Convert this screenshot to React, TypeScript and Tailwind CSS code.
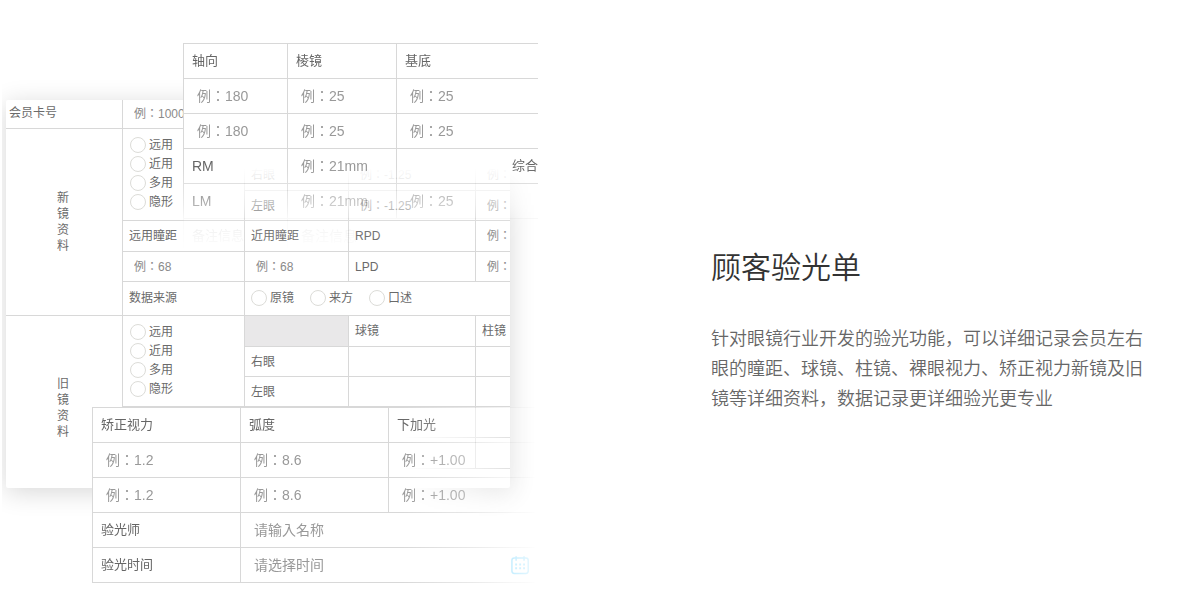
import { useId } from "react";

const cell = "border-t border-l border-[#d8d8d8]";
const smallInput =
  "block w-full bg-transparent pl-[11px] text-[12px] font-['Liberation_Sans','Noto_Sans_CJK_TC',sans-serif] text-[#777] placeholder:text-[#8a8a8a] outline-none";
const bigInput =
  "block w-full bg-transparent pl-[13px] text-[14px] font-['Liberation_Sans','Noto_Sans_CJK_TC',sans-serif] text-[#777] placeholder:text-[#999] outline-none";

const usos = ["远用", "近用", "多用", "隐形"];
const origenes = ["原镜", "来方", "口述"];

const Radios = ({ items, vertical }: { items: string[]; vertical?: boolean }) => {
  const name = useId();
  return (
    <div className={vertical ? "flex flex-col gap-[3px] pb-[2px]" : "flex gap-4"}>
      {items.map((item) => (
        <label key={item} className="flex h-4 items-center gap-[3px] leading-4">
          <input
            type="radio"
            name={name}
            className="size-4 appearance-none rounded-full border border-[#dcdcd8] bg-white checked:border-sky-400"
          />
          {item}
        </label>
      ))}
    </div>
  );
};

const VerticalTitle = ({ text }: { text: string }) => (
  <div className="mx-auto w-3 leading-4 break-all">{text}</div>
);

const MemberTable = () => (
  <table className="w-[504px] table-fixed border-separate border-spacing-0 rounded-xs bg-white text-left text-[12px] leading-4 text-[#6a6a6a] shadow-[0_4px_26px_rgba(0,0,0,0.16)]">
    <colgroup>
      <col className="w-[116px]" />
      <col className="w-[122px]" />
      <col className="w-[104px]" />
      <col className="w-[127px]" />
      <col className="w-[35px]" />
    </colgroup>
    <tbody>
      <tr className="h-7">
        <th className="pl-[3px] pb-[2px] font-normal">会员卡号</th>
        <td colSpan={4} className="border-l border-[#d8d8d8]">
          <input className={smallInput} aria-label="会员卡号" placeholder="例：100001" />
        </td>
      </tr>
      <tr className="h-[31px]">
        <th rowSpan={6} className="border-t border-[#d8d8d8] pr-[2px] font-normal">
          <VerticalTitle text="新镜资料" />
        </th>
        <td rowSpan={3} className={`${cell} pl-[7px]`}>
          <Radios items={usos} vertical />
        </td>
        <td className={`${cell} bg-[#e9e8e9]`} />
        <td className={`${cell} pl-[6px]`}>球镜</td>
        <td className={`${cell} pl-[6px]`}>柱镜</td>
      </tr>
      <tr className="h-[31px]">
        <td className={`${cell} pl-[6px]`}>右眼</td>
        <td className={cell}>
          <input className={smallInput} aria-label="右眼球镜" placeholder="例：-1.25" />
        </td>
        <td className={cell}>
          <input className={smallInput} aria-label="右眼柱镜" placeholder="例：" />
        </td>
      </tr>
      <tr className="h-[30px]">
        <td className={`${cell} pl-[6px]`}>左眼</td>
        <td className={cell}>
          <input className={smallInput} aria-label="左眼球镜" placeholder="例：-1.25" />
        </td>
        <td className={cell}>
          <input className={smallInput} aria-label="左眼柱镜" placeholder="例：" />
        </td>
      </tr>
      <tr className="h-[31px]">
        <td className={`${cell} pl-[6px]`}>远用瞳距</td>
        <td className={`${cell} pl-[6px]`}>近用瞳距</td>
        <td className={`${cell} pl-[6px]`}>RPD</td>
        <td className={cell}>
          <input className={smallInput} aria-label="RPD" placeholder="例：" />
        </td>
      </tr>
      <tr className="h-[30px]">
        <td className={cell}>
          <input className={smallInput} aria-label="远用瞳距" placeholder="例：68" />
        </td>
        <td className={cell}>
          <input className={smallInput} aria-label="近用瞳距" placeholder="例：68" />
        </td>
        <td className={`${cell} pl-[6px]`}>LPD</td>
        <td className={cell}>
          <input className={smallInput} aria-label="LPD" placeholder="例：" />
        </td>
      </tr>
      <tr className="h-[34px]">
        <td className={`${cell} pb-[2px] pl-[6px]`}>数据来源</td>
        <td colSpan={3} className={`${cell} pb-[2px] pl-[6px]`}>
          <Radios items={origenes} />
        </td>
      </tr>
      <tr className="h-[31px]">
        <th rowSpan={6} className="border-t border-[#d8d8d8] pt-3 pr-[2px] font-normal">
          <VerticalTitle text="旧镜资料" />
        </th>
        <td rowSpan={3} className={`${cell} pl-[7px]`}>
          <Radios items={usos} vertical />
        </td>
        <td className={`${cell} bg-[#e9e8e9]`} />
        <td className={`${cell} pl-[6px]`}>球镜</td>
        <td className={`${cell} pl-[6px]`}>柱镜</td>
      </tr>
      <tr className="h-[30px]">
        <td className={`${cell} pl-[6px]`}>右眼</td>
        <td className={cell} />
        <td className={cell} />
      </tr>
      <tr className="h-[30px]">
        <td className={`${cell} pl-[6px]`}>左眼</td>
        <td className={cell} />
        <td className={cell} />
      </tr>
      <tr className="h-[31px]">
        <td className={cell} />
        <td className={cell} />
        <td className={cell} />
        <td className={cell} />
      </tr>
      <tr className="h-[31px]">
        <td className={cell} />
        <td className={cell} />
        <td className={cell} />
        <td className={cell} />
      </tr>
      <tr className="h-5">
        <td colSpan={4} className={cell} />
      </tr>
    </tbody>
  </table>
);

const AxisTable = () => (
  <table className="absolute top-[43px] left-[181px] w-[355px] table-fixed border-separate border-spacing-0 bg-white text-left text-[13px] leading-4 text-[#666] mask-[linear-gradient(to_bottom,black_124px,rgba(0,0,0,0.85)_136px,rgba(0,0,0,0.5)_162px,rgba(0,0,0,0.12)_178px,transparent_208px)]">
    <colgroup>
      <col className="w-[104px]" />
      <col className="w-[109px]" />
      <col />
    </colgroup>
    <tbody>
      <tr className="h-[35px]">
        <th className={`${cell} pl-2 font-normal`}>轴向</th>
        <th className={`${cell} pl-2 font-normal`}>棱镜</th>
        <th className={`${cell} pl-2 font-normal`}>基底</th>
      </tr>
      {["右眼", "左眼"].map((ojo) => (
        <tr key={ojo} className="h-[35px]">
          <td className={cell}>
            <input className={bigInput} aria-label={`${ojo}轴向`} placeholder="例：180" />
          </td>
          <td className={cell}>
            <input className={bigInput} aria-label={`${ojo}棱镜`} placeholder="例：25" />
          </td>
          <td className={cell}>
            <input className={bigInput} aria-label={`${ojo}基底`} placeholder="例：25" />
          </td>
        </tr>
      ))}
      <tr className="h-[35px]">
        <td className={`${cell} pl-2 text-[14px]`}>RM</td>
        <td className={cell}>
          <input className={bigInput} aria-label="RM" placeholder="例：21mm" />
        </td>
        <td className={`${cell} text-right`}>综合</td>
      </tr>
      <tr className="h-[35px]">
        <td className={`${cell} pl-2 text-[14px]`}>LM</td>
        <td className={cell}>
          <input className={bigInput} aria-label="LM" placeholder="例：21mm" />
        </td>
        <td className={cell}>
          <input className={bigInput} aria-label="综合" placeholder="例：25" />
        </td>
      </tr>
      <tr className="h-[35px]">
        <td className={`${cell} pl-2`}>备注信息</td>
        <td colSpan={2} className={cell}>
          <input className={bigInput} aria-label="备注信息" placeholder="备注信息" />
        </td>
      </tr>
    </tbody>
  </table>
);

const CalendarIcon = () => (
  <svg width="20" height="20" viewBox="0 0 20 20" fill="none" stroke="#00b4ff" strokeWidth="1.6">
    <rect x="1" y="2.5" width="17.5" height="16.5" rx="2.5" />
    <path d="M5.5 0.5v5M14 0.5v5" />
    <path d="M4.5 9.5h2M8.8 9.5h2M13 9.5h2M4.5 13.5h2M8.8 13.5h2M13 13.5h2" strokeWidth="2" />
  </svg>
);

const VisionTable = () => (
  <table className="absolute top-[407px] left-[90px] w-[446px] table-fixed border-separate border-spacing-0 border-b border-[#d8d8d8] bg-white text-left text-[13px] leading-4 text-[#666] mask-[linear-gradient(to_right,black_310px,rgba(0,0,0,0.6)_375px,rgba(0,0,0,0.22)_420px,rgba(0,0,0,0.12)_436px,transparent_444px)]">
    <colgroup>
      <col className="w-[148px]" />
      <col className="w-[148px]" />
      <col />
    </colgroup>
    <tbody>
      <tr className="h-[35px]">
        <th className={`${cell} pl-2 font-normal`}>矫正视力</th>
        <th className={`${cell} pl-2 font-normal`}>弧度</th>
        <th className={`${cell} pl-2 font-normal`}>下加光</th>
      </tr>
      {["右眼", "左眼"].map((ojo) => (
        <tr key={ojo} className="h-[35px]">
          <td className={cell}>
            <input className={bigInput} aria-label={`${ojo}矫正视力`} placeholder="例：1.2" />
          </td>
          <td className={cell}>
            <input className={bigInput} aria-label={`${ojo}弧度`} placeholder="例：8.6" />
          </td>
          <td className={cell}>
            <input className={bigInput} aria-label={`${ojo}下加光`} placeholder="例：+1.00" />
          </td>
        </tr>
      ))}
      <tr className="h-[35px]">
        <td className={`${cell} pl-2`}>验光师</td>
        <td colSpan={2} className={cell}>
          <input className={bigInput} aria-label="验光师" placeholder="请输入名称" />
        </td>
      </tr>
      <tr className="h-[35px]">
        <td className={`${cell} pl-2`}>验光时间</td>
        <td colSpan={2} className={cell}>
          <div className="flex items-center pr-2">
            <input className={bigInput} aria-label="验光时间" placeholder="请选择时间" />
            <CalendarIcon />
          </div>
        </td>
      </tr>
    </tbody>
  </table>
);

const App = () => {
  return (
    <section className="flex w-full bg-white font-['Liberation_Sans','Noto_Sans_CJK_SC',sans-serif]">
      <div className="relative ml-0.5 w-[536px] shrink-0 overflow-hidden pt-[100px] pb-[101px] pl-1">
        <MemberTable />
        <AxisTable />
        <VisionTable />
      </div>

      <div className="flex-1 pt-[245px] pr-12 pl-[173px]">
        <h2 className="text-[30px] leading-[45px] font-[350] text-[#333]">顾客验光单</h2>
        <p className="mt-[34px] text-[18px] leading-[30px] font-[350] text-[#666]">
          针对眼镜行业开发的验光功能，可以详细记录会员左右眼的瞳距、球镜、柱镜、裸眼视力、矫正视力新镜及旧镜等详细资料，数据记录更详细验光更专业
        </p>
      </div>
    </section>
  );
};

export default App;
